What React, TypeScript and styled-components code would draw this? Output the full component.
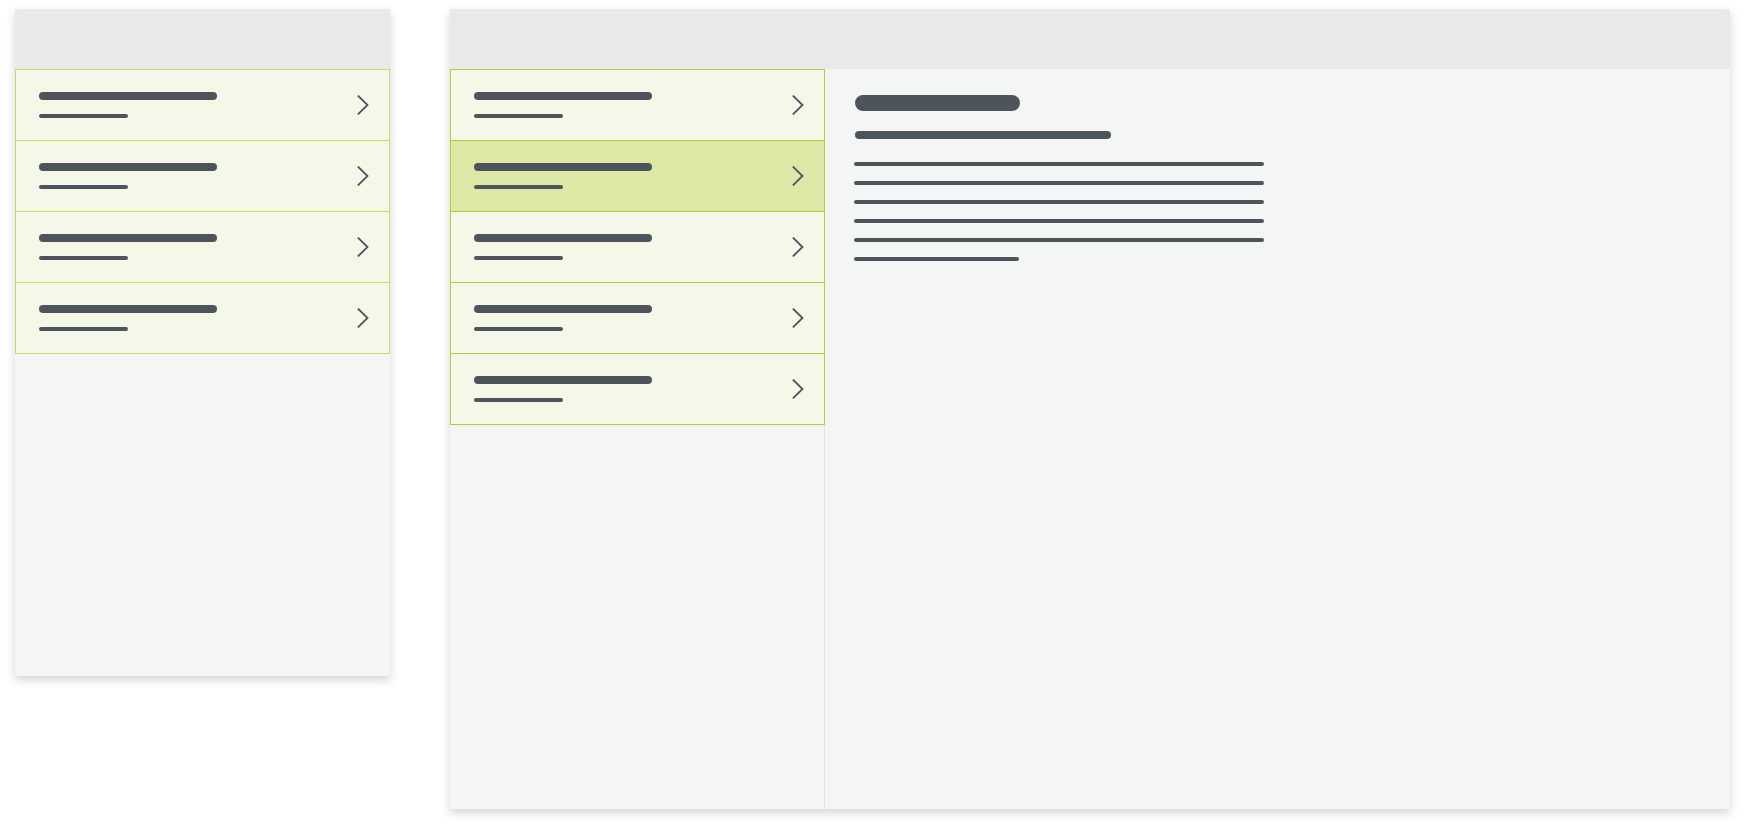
import React from "react";
import styled, { createGlobalStyle } from "styled-components";

const Global = createGlobalStyle`
  html, body { margin: 0; padding: 0; background: #ffffff; font-family: "Liberation Sans", Arial, sans-serif; }
  * { box-sizing: border-box; }
`;

const Stage = styled.div`
  display: flex;
  align-items: flex-start;
  gap: 60px;
  padding: 9px 0 0 15px;
  width: 1745px;
  height: 830px;
`;

const Panel = styled.div<{ $w: number; $h: number }>`
  width: ${(p) => p.$w}px;
  height: ${(p) => p.$h}px;
  background: #f4f6f5;
  box-shadow: 0 4px 9px rgba(0, 0, 0, 0.17);
  display: flex;
  flex-direction: column;
  flex-shrink: 0;
`;

const Header = styled.div`
  height: 60px;
  background: #e8e9eb;
  flex-shrink: 0;
`;

const Body = styled.div`
  flex: 1;
  display: flex;
  min-height: 0;
`;

const ListColumn = styled.div<{ $divider?: boolean }>`
  width: 375px;
  flex-shrink: 0;
  ${(p) => (p.$divider ? "border-right: 1px solid #e2e4e3;" : "")}
`;

const List = styled.div<{ $border: string; $divider?: boolean }>`
  border-bottom: 1px solid ${(p) => p.$border};
  ${(p) => (p.$divider ? "margin-right: -1px;" : "")}
`;

const Row = styled.div<{ $selected?: boolean; $border: string }>`
  height: 71px;
  display: flex;
  align-items: center;
  justify-content: space-between;
  padding: 0 20px 0 23px;
  background: ${(p) => (p.$selected ? "#dde8a6" : "#f5f8e8")};
  border-top: 1px solid ${(p) => p.$border};
  border-left: 1px solid ${(p) => p.$border};
  border-right: 1px solid ${(p) => p.$border};
`;

const RowText = styled.div`
  display: flex;
  flex-direction: column;
  gap: 14px;
`;

const Bar = styled.div<{ $w: number; $h: number }>`
  width: ${(p) => p.$w}px;
  height: ${(p) => p.$h}px;
  border-radius: ${(p) => p.$h / 2}px;
  background: #4d555b;
`;

const Detail = styled.div`
  flex: 1;
  padding: 26px 30px;
  display: flex;
  flex-direction: column;
`;

const DetailTitle = styled(Bar)`
  margin-bottom: 20px;
`;

const DetailSub = styled(Bar)`
  margin-bottom: 23px;
`;

const Lines = styled.div`
  display: flex;
  flex-direction: column;
  gap: 15px;
  margin-left: -1px;
`;

const Chevron = () => (
  <svg width="12" height="20" viewBox="0 0 12 20" fill="none">
    <path d="M1.5 1.2 L10.5 10 L1.5 18.8" stroke="#4d555b" strokeWidth="1.8" strokeLinecap="square" />
  </svg>
);

const ListItem = ({ selected, border }: { selected?: boolean; border: string }) => (
  <Row $selected={selected} $border={border}>
    <RowText>
      <Bar $w={178} $h={8} />
      <Bar $w={89} $h={4} />
    </RowText>
    <Chevron />
  </Row>
);

export default function App() {
  const leftBorder = "#c9da6e";
  const rightBorder = "#b5cc38";
  return (
    <>
      <Global />
      <Stage>
        <Panel $w={375} $h={667}>
          <Header />
          <Body>
            <ListColumn>
              <List $border={leftBorder}>
                {[0, 1, 2, 3].map((i) => (
                  <ListItem key={i} border={leftBorder} />
                ))}
              </List>
            </ListColumn>
          </Body>
        </Panel>
        <Panel $w={1280} $h={800}>
          <Header />
          <Body>
            <ListColumn $divider>
              <List $border={rightBorder} $divider>
                {[0, 1, 2, 3, 4].map((i) => (
                  <ListItem key={i} border={rightBorder} selected={i === 1} />
                ))}
              </List>
            </ListColumn>
            <Detail>
              <DetailTitle $w={165} $h={16} />
              <DetailSub $w={256} $h={8} />
              <Lines>
                {[410, 410, 410, 410, 410, 165].map((w, i) => (
                  <Bar key={i} $w={w} $h={4} />
                ))}
              </Lines>
            </Detail>
          </Body>
        </Panel>
      </Stage>
    </>
  );
}
